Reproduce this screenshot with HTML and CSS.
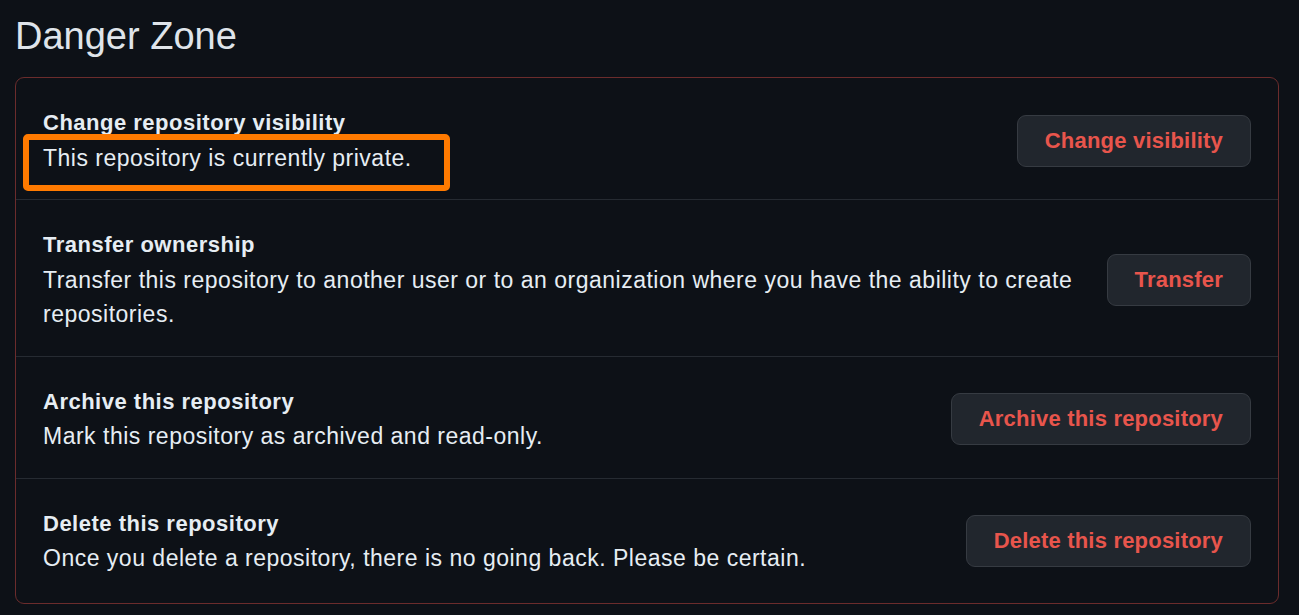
FILE: index.html
```html
<!DOCTYPE html>
<html lang="en">
<head>
<meta charset="utf-8">
<title>Danger Zone</title>
<link rel="stylesheet" href="styles.css">
</head>
<body>
<main class="page">
  <h2 class="title">Danger Zone</h2>
  <div class="zone">
    <div class="row">
      <div class="info">
        <strong class="name">Change repository visibility</strong>
        <p class="desc">This repository is currently private.</p>
        <span class="highlight"></span>
      </div>
      <button class="btn">Change visibility</button>
    </div>
    <div class="row">
      <div class="info">
        <strong class="name">Transfer ownership</strong>
        <p class="desc">Transfer this repository to another user or to an organization where you have the ability to create repositories.</p>
      </div>
      <button class="btn">Transfer</button>
    </div>
    <div class="row">
      <div class="info">
        <strong class="name">Archive this repository</strong>
        <p class="desc">Mark this repository as archived and read-only.</p>
      </div>
      <button class="btn">Archive this repository</button>
    </div>
    <div class="row row-last">
      <div class="info">
        <strong class="name">Delete this repository</strong>
        <p class="desc">Once you delete a repository, there is no going back. Please be certain.</p>
      </div>
      <button class="btn">Delete this repository</button>
    </div>
  </div>
</main>
</body>
</html>
```

FILE: styles.css
```css
html, body {
  margin: 0;
  padding: 0;
  background: #0d1117;
}
body {
  font-family: "Liberation Sans", Arial, sans-serif;
  color: #e6edf3;
}
.page {
  padding: 0 20px 0 15px;
}
.title {
  margin: 0;
  padding-top: 13px;
  height: 77px;
  box-sizing: border-box;
  font-size: 38px;
  font-weight: 400;
  line-height: 46px;
  color: #dfe4ea;
}
.zone {
  border: 1.5px solid #6b2c2c;
  border-radius: 9px;
}
.row {
  display: flex;
  align-items: center;
  gap: 32px;
  padding: 28px 27px 24px 27px;
  border-top: 1.5px solid #262b32;
}
.row:first-child {
  border-top: none;
}
.row-last {
  padding-bottom: 27px;
}
.info {
  position: relative;
  flex: 1;
  min-width: 0;
}
.name {
  display: block;
  font-size: 22px;
  letter-spacing: 0.5px;
  line-height: 34.5px;
  font-weight: 700;
  color: #e6edf3;
}
.desc {
  margin: 0;
  font-size: 23px;
  letter-spacing: 0.5px;
  line-height: 34.5px;
  color: #e6edf3;
}
.btn {
  flex: none;
  font-family: inherit;
  font-size: 22px;
  letter-spacing: 0.2px;
  font-weight: 700;
  color: #e8554c;
  background: #21262d;
  border: 1.5px solid #363b42;
  border-radius: 9px;
  height: 52px;
  padding: 0 27px;
}
.highlight {
  position: absolute;
  left: -20px;
  top: 28px;
  width: 427px;
  height: 57px;
  box-sizing: border-box;
  border: 6px solid #ff7a00;
  border-radius: 5px;
}
```
